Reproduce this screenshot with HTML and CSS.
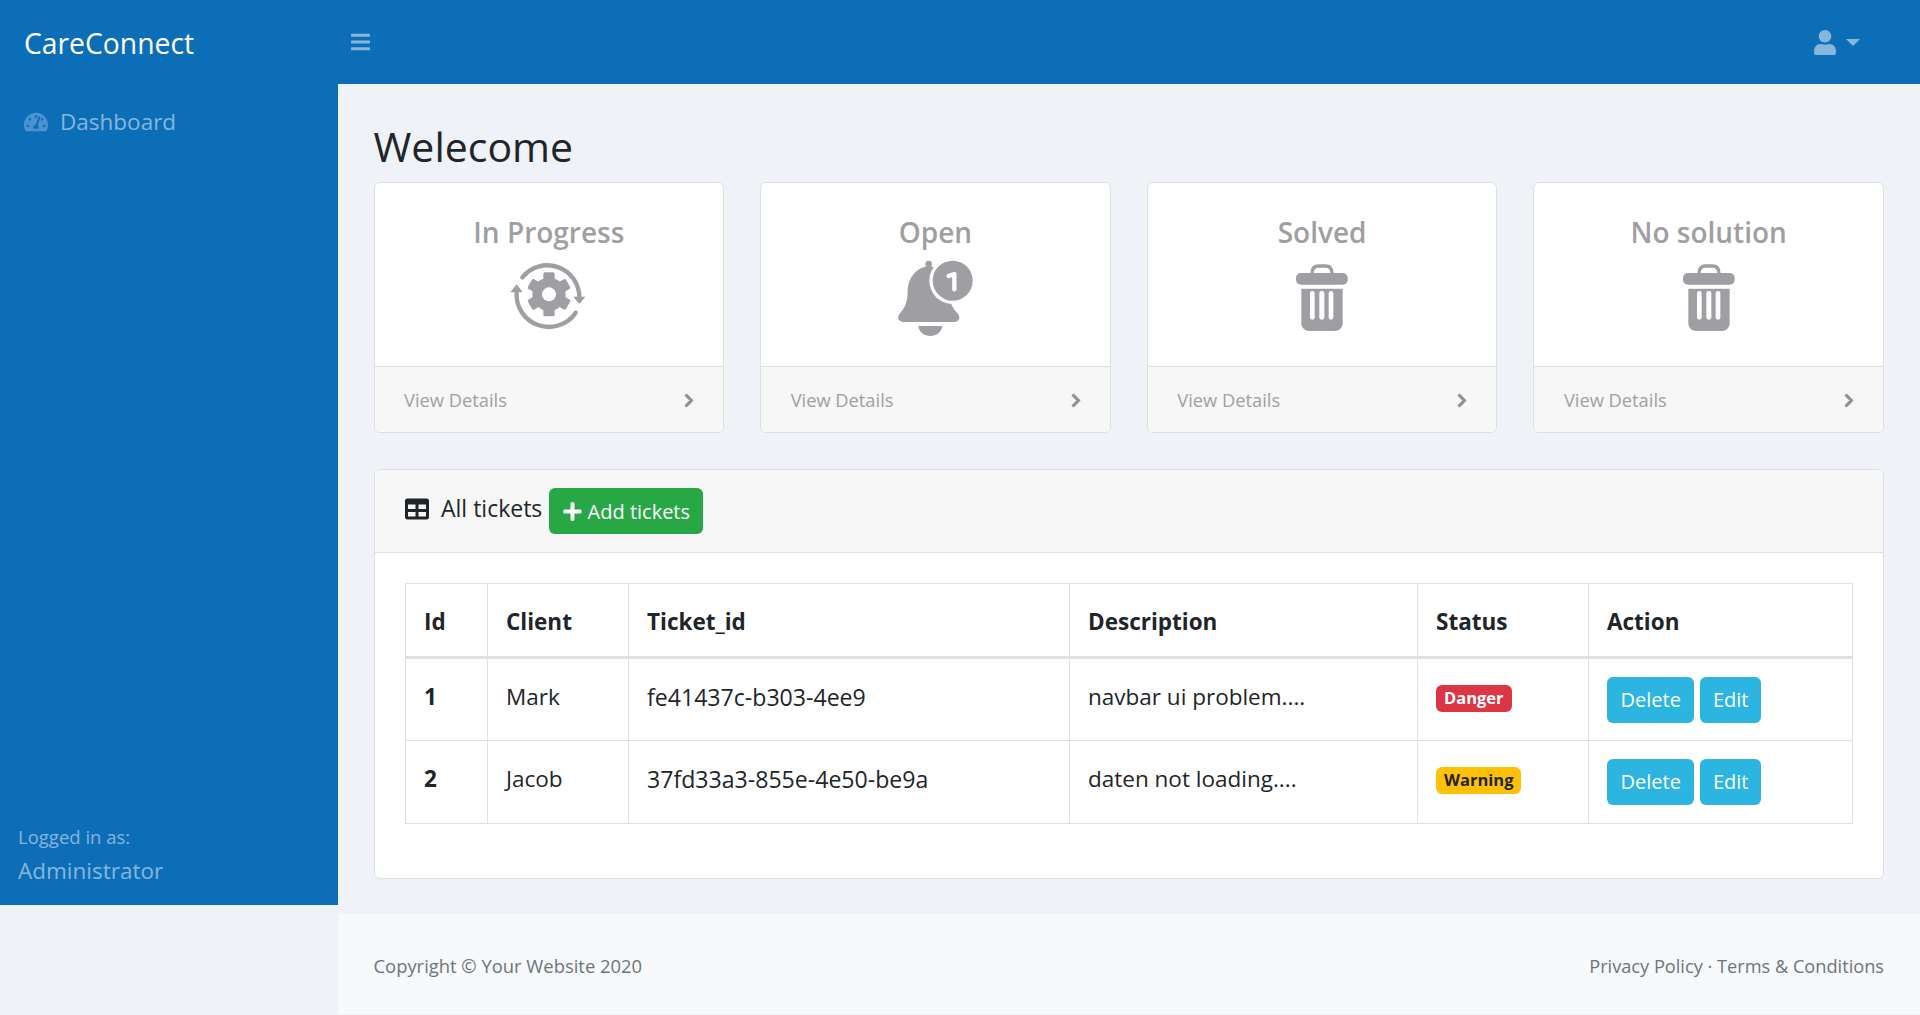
FILE: index.html
```html
<!DOCTYPE html>
<html lang="en">
<head>
    <meta charset="UTF-8">
    <meta name="viewport" content="width=device-width, initial-scale=1.0">
    <title>CareConnect</title>
    <link rel="stylesheet" href="styles.css">
</head>
<body>
    <svg class="icon-defs" aria-hidden="true">
        <symbol id="i-chevron" viewBox="0 0 320 512"><path d="M285.476 272.971L91.132 467.314c-9.373 9.373-24.569 9.373-33.941 0l-22.667-22.667c-9.357-9.357-9.375-24.522-.04-33.901L188.505 256 34.484 101.255c-9.335-9.379-9.317-24.544.04-33.901l22.667-22.667c9.373-9.373 24.569-9.373 33.941 0L285.475 239.03c9.373 9.372 9.373 24.568.001 33.941z"/></symbol>
        <symbol id="i-trash" viewBox="8 0 300 270">
            <path class="trash-handle" d="M128 70c0-15 8-22 20-22h20c12 0 20 7 20 22"/>
            <rect x="80" y="69" width="155" height="35" rx="15"/>
            <path d="M96 116h124v103c0 14-10 24-24 24h-76c-14 0-24-10-24-24z"/>
            <rect class="hole" x="122" y="123" width="14" height="86" rx="7"/>
            <rect class="hole" x="150" y="123" width="15" height="86" rx="7"/>
            <rect class="hole" x="178" y="123" width="14" height="86" rx="7"/>
        </symbol>
    </svg>

    <nav class="topbar">
        <a class="brand" href="#">CareConnect</a>
        <button class="toggle" type="button">
            <svg class="toggle-icon" viewBox="0 0 448 512"><path d="M16 132h416c8.837 0 16-7.163 16-16V76c0-8.837-7.163-16-16-16H16C7.163 60 0 67.163 0 76v40c0 8.837 7.163 16 16 16zm0 160h416c8.837 0 16-7.163 16-16v-40c0-8.837-7.163-16-16-16H16c-8.837 0-16 7.163-16 16v40c0 8.837 7.163 16 16 16zm0 160h416c8.837 0 16-7.163 16-16v-40c0-8.837-7.163-16-16-16H16c-8.837 0-16 7.163-16 16v40c0 8.837 7.163 16 16 16z"/></svg>
        </button>
        <a class="user-menu" href="#">
            <svg class="user-icon" viewBox="0 0 448 512"><path d="M224 256c70.7 0 128-57.3 128-128S294.7 0 224 0 96 57.3 96 128s57.3 128 128 128zm89.6 32h-16.7c-22.2 10.2-46.9 16-72.9 16s-50.6-5.8-72.9-16h-16.7C60.2 288 0 348.2 0 422.4V464c0 26.5 21.5 48 48 48h352c26.5 0 48-21.5 48-48v-41.6c0-74.2-60.2-134.4-134.4-134.4z"/></svg>
            <span class="caret"></span>
        </a>
    </nav>

    <div class="layout">
        <aside class="sidebar">
            <a class="side-link" href="#">
                <svg class="side-icon" viewBox="0 0 576 512"><path d="M288 32C128.94 32 0 160.94 0 320c0 52.8 14.25 102.26 39.06 144.8 5.61 9.62 16.3 15.2 27.44 15.2h443c11.14 0 21.83-5.58 27.44-15.2C561.75 422.26 576 372.8 576 320c0-159.06-128.94-288-288-288zm0 64c14.71 0 26.58 10.13 30.32 23.65-1.11 2.26-2.64 4.23-3.45 6.67l-9.22 27.67c-5.13 3.49-10.97 6.01-17.64 6.01-17.67 0-32-14.33-32-32S270.33 96 288 96zM96 384c-17.67 0-32-14.33-32-32s14.33-32 32-32 32 14.33 32 32-14.33 32-32 32zm48-160c-17.67 0-32-14.33-32-32s14.33-32 32-32 32 14.33 32 32-14.33 32-32 32zm246.77-72.41l-61.33 184C343.13 347.33 352 364.54 352 384c0 11.72-3.38 22.55-8.88 32H232.88c-5.5-9.45-8.88-20.28-8.88-32 0-33.94 26.5-61.43 59.9-63.59l61.34-184.01c4.17-12.56 17.73-19.45 30.36-15.17 12.57 4.19 19.35 17.79 15.17 30.36zm14.66 57.2l15.52-46.55c3.47-1.29 7.13-2.23 11.05-2.23 17.67 0 32 14.33 32 32s-14.33 32-32 32c-11.38-.01-20.89-6.28-26.57-15.22zM480 384c-17.67 0-32-14.33-32-32s14.33-32 32-32 32 14.33 32 32-14.33 32-32 32z"/></svg>
                Dashboard
            </a>
            <div class="side-footer">
                <div class="logged-label">Logged in as:</div>
                <div class="logged-name">Administrator</div>
            </div>
        </aside>

        <div class="page">
            <main class="content">
                <h1>Welecome</h1>

                <div class="stats">
                    <div class="card stat">
                        <div class="stat-body">
                            <h5>In Progress</h5>
                            <svg class="stat-icon" viewBox="-2 0 300 270">
                                <g class="gear-arcs">
                                    <path d="M68 82A96 96 0 0 1 239 142"/>
                                    <path d="M228 188A97 97 0 0 1 51 125"/>
                                </g>
                                <path d="M221 140h36l-18 22z"/>
                                <path d="M32 127h37l-18-24z"/>
                                <circle cx="148" cy="133" r="50"/>
                                <rect x="131" y="67" width="34" height="132" rx="5"/>
                                <rect x="131" y="67" width="34" height="132" rx="5" transform="rotate(60 148 133)"/>
                                <rect x="131" y="67" width="34" height="132" rx="5" transform="rotate(120 148 133)"/>
                                <circle class="hole" cx="148" cy="133" r="21"/>
                            </svg>
                        </div>
                        <a class="stat-foot" href="#">View Details <svg class="chevron"><use href="#i-chevron"/></svg></a>
                    </div>
                    <div class="card stat">
                        <div class="stat-body">
                            <h5>Open</h5>
                            <svg class="stat-icon" viewBox="-3 0 300 270">
                                <circle cx="128" cy="42" r="10"/>
                                <path d="M128 48C90 53 65 85 65 125c0 40-15 55-25 67-8 13 0 24 12 24h153c13 0 20-11 11-24-11-14-26-27-26-67 0-40-25-72-62-77z"/>
                                <path d="M97 228h72c-2 18-17 30-36 30s-34-12-36-30z"/>
                                <circle class="hole" cx="200" cy="92" r="70"/>
                                <circle cx="200" cy="92" r="60"/>
                                <path class="bell-one" d="M188 78l17-6v46"/>
                            </svg>
                        </div>
                        <a class="stat-foot" href="#">View Details <svg class="chevron"><use href="#i-chevron"/></svg></a>
                    </div>
                    <div class="card stat">
                        <div class="stat-body">
                            <h5>Solved</h5>
                            <svg class="stat-icon"><use href="#i-trash"/></svg>
                        </div>
                        <a class="stat-foot" href="#">View Details <svg class="chevron"><use href="#i-chevron"/></svg></a>
                    </div>
                    <div class="card stat">
                        <div class="stat-body">
                            <h5>No solution</h5>
                            <svg class="stat-icon"><use href="#i-trash"/></svg>
                        </div>
                        <a class="stat-foot" href="#">View Details <svg class="chevron"><use href="#i-chevron"/></svg></a>
                    </div>
                </div>

                <div class="card tickets">
                    <div class="tickets-head">
                        <svg class="table-icon" viewBox="0 0 512 512"><path d="M464 32H48C21.49 32 0 53.49 0 80v352c0 26.51 21.49 48 48 48h416c26.51 0 48-21.49 48-48V80c0-26.51-21.49-48-48-48zM224 416H64v-96h160v96zm0-160H64v-96h160v96zm224 160H288v-96h160v96zm0-160H288v-96h160v96z"/></svg>
                        <span class="tickets-title">All tickets</span>
                        <a class="btn btn-add" href="#">
                            <svg class="plus-icon" viewBox="0 0 448 512"><path d="M416 208H272V64c0-17.67-14.33-32-32-32h-32c-17.67 0-32 14.33-32 32v144H32c-17.67 0-32 14.33-32 32v32c0 17.67 14.33 32 32 32h144v144c0 17.67 14.33 32 32 32h32c17.67 0 32-14.33 32-32V304h144c17.67 0 32-14.33 32-32v-32c0-17.67-14.33-32-32-32z"/></svg>
                            Add tickets
                        </a>
                    </div>
                    <div class="tickets-body">
                        <table>
                            <colgroup>
                                <col class="col-id">
                                <col class="col-client">
                                <col class="col-ticket">
                                <col class="col-desc">
                                <col class="col-status">
                                <col class="col-action">
                            </colgroup>
                            <thead>
                                <tr>
                                    <th>Id</th>
                                    <th>Client</th>
                                    <th>Ticket_id</th>
                                    <th>Description</th>
                                    <th>Status</th>
                                    <th>Action</th>
                                </tr>
                            </thead>
                            <tbody>
                                <tr>
                                    <th>1</th>
                                    <td>Mark</td>
                                    <td class="ticket-id">fe41437c-b303-4ee9</td>
                                    <td>navbar ui problem....</td>
                                    <td><span class="badge badge-danger">Danger</span></td>
                                    <td class="actions"><a class="btn btn-info" href="#">Delete</a><a class="btn btn-info" href="#">Edit</a></td>
                                </tr>
                                <tr>
                                    <th>2</th>
                                    <td>Jacob</td>
                                    <td class="ticket-id">37fd33a3-855e-4e50-be9a</td>
                                    <td>daten not loading....</td>
                                    <td><span class="badge badge-warning">Warning</span></td>
                                    <td class="actions"><a class="btn btn-info" href="#">Delete</a><a class="btn btn-info" href="#">Edit</a></td>
                                </tr>
                            </tbody>
                        </table>
                    </div>
                </div>
            </main>

            <footer class="footer">
                <div>Copyright &copy; Your Website 2020</div>
                <div class="footer-links"><a href="#">Privacy Policy</a> &middot; <a href="#">Terms &amp; Conditions</a></div>
            </footer>
        </div>
    </div>
</body>
</html>
```

FILE: styles.css
```css
* {
    box-sizing: border-box;
}

body {
    margin: 0;
    font-family: "Open Sans", "Noto Sans", sans-serif;
    font-size: 22.5px;
    color: #212529;
    background-color: #eff2f7;
}

a {
    text-decoration: none;
    color: inherit;
}

svg {
    fill: currentColor;
}

.icon-defs {
    display: none;
}

/* top bar */
.topbar {
    display: flex;
    align-items: center;
    height: 84px;
    background-color: #0d6eb8;
}

.brand {
    width: 338px;
    padding-left: 24px;
    padding-top: 1px;
    font-size: 28.3px;
    color: #ffffff;
}

.toggle {
    display: flex;
    padding: 0;
    margin-left: 13px;
    border: none;
    background: none;
    color: #86b6dc;
}

.toggle-icon {
    width: 19px;
    height: 22px;
}

.user-menu {
    display: flex;
    align-items: center;
    margin-left: auto;
    margin-right: 60px;
    color: #86b6dc;
}

.user-icon {
    width: 22px;
    height: 25px;
}

.caret {
    margin-left: 10px;
    border-top: 7px solid #86b6dc;
    border-left: 7px solid transparent;
    border-right: 7px solid transparent;
}

/* sidebar + page */
.layout {
    display: flex;
    align-items: flex-start;
}

.sidebar {
    display: flex;
    flex-direction: column;
    flex: 0 0 338px;
    height: 821px;
    background-color: #0d6eb8;
    color: #86b6dc;
}

.side-link {
    display: flex;
    align-items: center;
    gap: 12px;
    margin-top: 20px;
    padding-left: 24px;
    line-height: 36px;
}

.side-icon {
    width: 24px;
    height: 22px;
    color: #4a93d0;
}

.side-footer {
    margin-top: auto;
    padding: 0 18px 16px;
}

.logged-label {
    font-size: 18.5px;
    line-height: 32px;
}

.logged-name {
    line-height: 36px;
}

.page {
    flex: 1;
    min-width: 0;
}

.content {
    padding: 37px 36px 35px 35.5px;
}

h1 {
    margin: 0 0 11px;
    font-size: 41px;
    font-weight: 500;
    line-height: 50px;
}

/* cards */
.card {
    background-color: #ffffff;
    border: 1px solid #dfdfdf;
    border-radius: 6px;
    overflow: hidden;
}

.stats {
    display: grid;
    grid-template-columns: repeat(4, 1fr);
    gap: 36px;
    margin-bottom: 36px;
}

.stat-body {
    height: 183px;
    padding-top: 31px;
    text-align: center;
}

h5 {
    margin: 0;
    font-size: 28px;
    font-weight: 600;
    line-height: 36px;
    color: #9f9fa3;
}

.stat-icon {
    display: block;
    width: 100px;
    height: 90px;
    margin: 0 auto;
    color: #9f9fa3;
}

.hole {
    fill: #ffffff;
}

.gear-arcs,
.trash-handle,
.bell-one {
    fill: none;
}

.gear-arcs {
    stroke: #9f9fa3;
    stroke-width: 13;
    stroke-linecap: round;
}

.trash-handle {
    stroke: #9f9fa3;
    stroke-width: 10;
}

.bell-one {
    stroke: #ffffff;
    stroke-width: 13;
    stroke-linecap: round;
    stroke-linejoin: round;
}

.stat-foot {
    display: flex;
    align-items: center;
    justify-content: space-between;
    height: 66px;
    padding: 0 29px 0 29.5px;
    border-top: 1px solid #dfdfdf;
    background-color: #f7f7f7;
    font-size: 18.3px;
    color: #a0a0a4;
}

.chevron {
    width: 10px;
    height: 15px;
    margin-top: 1px;
    color: #8f8f93;
    stroke: currentColor;
    stroke-width: 30;
}

/* tickets */
.tickets-head {
    display: flex;
    align-items: center;
    height: 83px;
    padding: 0 30px;
    border-bottom: 1px solid #dfdfdf;
    background-color: #f7f7f7;
}

.table-icon {
    width: 24px;
    height: 24px;
    margin-top: -5px;
}

.tickets-title {
    margin: -6px 7px 0 12.5px;
    font-size: 23px;
}

.btn {
    display: inline-flex;
    align-items: center;
    justify-content: center;
    height: 46px;
    border-radius: 6px;
    color: #ffffff;
}

.btn-add {
    gap: 6px;
    width: 154px;
    background-color: #28a745;
    font-size: 20px;
}

.plus-icon {
    width: 19px;
    height: 21px;
}

.tickets-body {
    padding: 30px 30px 54px;
}

table {
    width: 1447px;
    table-layout: fixed;
    border-collapse: collapse;
}

.col-id { width: 82px; }
.col-client { width: 141px; }
.col-ticket { width: 441px; }
.col-desc { width: 348px; }
.col-status { width: 171px; }
.col-action { width: 264px; }

th,
td {
    padding: 20px 18.5px 0;
    border: 1px solid #dee2e6;
    line-height: 36px;
    text-align: left;
    vertical-align: top;
}

th {
    font-weight: 700;
}

thead tr {
    height: 74px;
}

tbody tr {
    height: 83px;
}

thead th {
    padding-top: 20px;
    border-bottom: 3px solid #dee2e6;
}

.ticket-id {
    font-size: 23.1px;
}

.badge {
    display: inline-flex;
    align-items: center;
    height: 27px;
    margin-top: 6px;
    padding: 0 8px;
    border-radius: 6px;
    font-size: 16.5px;
    font-weight: 700;
    line-height: 1;
    vertical-align: top;
}

.badge-danger {
    background-color: #dc3545;
    color: #ffffff;
}

.badge-warning {
    background-color: #ffc107;
    color: #212529;
}

td.actions {
    padding-top: 18px;
    line-height: 0;
}

.btn-info {
    padding: 0 13.5px;
    margin-right: 6px;
    background-color: #2bb5e0;
    font-size: 20px;
    line-height: 1;
}

.btn-info + .btn-info {
    padding: 0 12.5px;
}

/* footer */
.footer {
    display: flex;
    align-items: center;
    justify-content: space-between;
    height: 100px;
    padding: 3px 36px 0 35.5px;
    background-color: #f8f9fa;
    font-size: 18.4px;
    color: #6c757d;
}

.footer-links {
    font-size: 18.2px;
}
```
